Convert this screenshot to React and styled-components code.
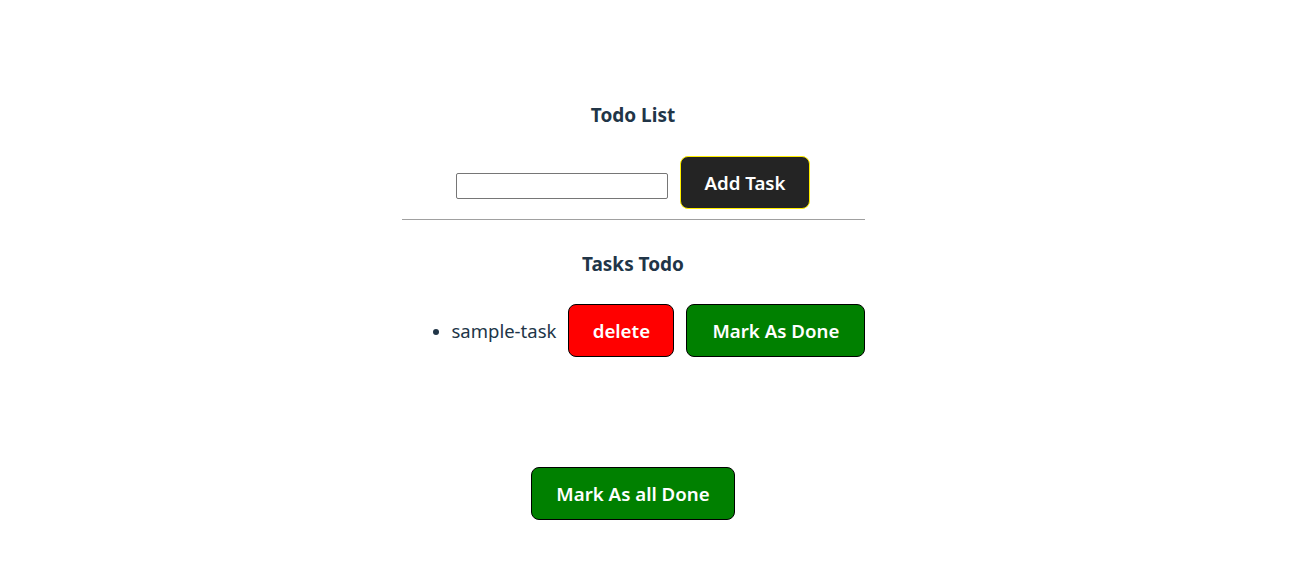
import React, { useState } from 'react';
import styled, { createGlobalStyle } from 'styled-components';

const GlobalStyle = createGlobalStyle`
  body {
    margin: 0;
    background: #fff;
    color: #213547;
    font-family: "Noto Sans", "Open Sans", sans-serif;
    font-size: 18px;
  }
`;

const Page = styled.div`
  display: flex;
  justify-content: center;
  padding-right: 34px;
`;

const Column = styled.div`
  width: 463px;
  display: flex;
  flex-direction: column;
  align-items: center;
`;

const Heading = styled.h3`
  margin: ${({ top }) => top}px 0 0;
  font-size: 19px;
  line-height: 26px;
  font-weight: 700;
  color: #213547;
`;

const FormRow = styled.div`
  margin-top: 28px;
  display: flex;
  align-items: center;
  gap: 12px;
`;

const TaskInput = styled.input`
  width: 212px;
  height: 26px;
  box-sizing: border-box;
  margin-top: 6px;
  border: 1px solid #767676;
  border-radius: 2px;
  padding: 1px 2px;
  font-size: 13px;
`;

const Button = styled.button`
  box-sizing: border-box;
  flex-shrink: 0;
  width: ${({ w }) => w}px;
  height: ${({ h }) => h || 53}px;
  padding: 0 0 1px;
  border-radius: 8px;
  border: 1px solid ${({ edge }) => edge || '#000'};
  background: ${({ bg }) => bg};
  color: #fff;
  font-family: "Noto Sans", "Open Sans", sans-serif;
  font-size: 18.7px;
  font-weight: 600;
  white-space: nowrap;
  cursor: pointer;
`;

const Rule = styled.hr`
  width: 100%;
  margin: 10px 0 0;
  border: none;
  border-top: 1px solid #a0a0a0;
`;

const TaskList = styled.ul`
  align-self: stretch;
  margin: 27px 0 0;
  padding-left: 50px;
  list-style: disc outside;
`;

const TaskItem = styled.li`
  font-size: 18.5px;
  line-height: 53px;
  &::marker {
    font-size: 17px;
  }
`;

const TaskRow = styled.div`
  display: flex;
  align-items: center;
  gap: 12px;
  white-space: nowrap;
`;

const TaskName = styled.span`
  flex-shrink: 0;
  color: #213547;
`;

const Footer = styled.div`
  margin-top: 110px;
`;

export default function App() {
  const [tasks] = useState(['sample-task']);
  return (
    <>
      <GlobalStyle />
      <Page>
        <Column>
          <Heading top={102}>Todo List</Heading>
          <FormRow>
            <TaskInput type="text" />
            <Button w={130} bg="#242424" edge="#ffee00">Add Task</Button>
          </FormRow>
          <Rule />
          <Heading top={31}>Tasks Todo</Heading>
          <TaskList>
            {tasks.map((t) => (
              <TaskItem key={t}>
                <TaskRow>
                  <TaskName>{t}</TaskName>
                  <Button w={106} bg="#ff0000">delete</Button>
                  <Button w={179} bg="#008000">Mark As Done</Button>
                </TaskRow>
              </TaskItem>
            ))}
          </TaskList>
          <Footer>
            <Button w={204} bg="#008000">Mark As all Done</Button>
          </Footer>
        </Column>
      </Page>
    </>
  );
}
